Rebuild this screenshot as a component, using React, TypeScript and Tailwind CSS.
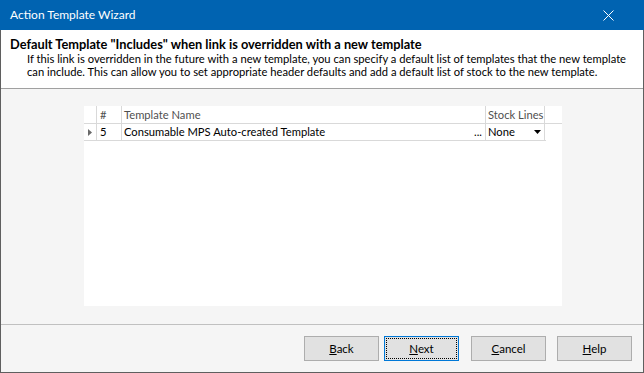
import React from "react";

const font = { fontFamily: 'Lato, "Noto Sans", "Liberation Sans", sans-serif' };

function Btn({ label, u, focused }: { label: string; u: number; focused?: boolean }) {
  return (
    <div
      className={`w-[75px] h-[25px] flex items-center justify-center text-[11.5px] text-black bg-[#e1e1e1] border ${
        focused ? "border-[#0078d7]" : "border-[#adadad]"
      }`}
    >
      <div
        className={`w-[71px] h-[21px] flex items-center justify-center ${
          focused ? "border border-dotted border-black" : ""
        }`}
      >
        <span>
          {label.slice(0, u)}
          <span className="underline">{label.charAt(u)}</span>
          {label.slice(u + 1)}
        </span>
      </div>
    </div>
  );
}

export default function App() {
  return (
    <div style={font} className="w-[644px] h-[373px] flex flex-col bg-[#f5f5f5] overflow-hidden">
      <div className="h-[30px] bg-[#0063b1] flex items-center justify-between pl-[10px] pr-[30px] shrink-0">
        <span className="text-white text-[12px]">Action Template Wizard</span>
        <svg width="11" height="11" viewBox="0 0 11 11">
          <path d="M0.5 0.5 L10.5 10.5 M10.5 0.5 L0.5 10.5" stroke="white" strokeWidth="1" />
        </svg>
      </div>
      <div className="flex-1 flex flex-col border-x border-b border-[#5f5f5f]">
        <div className="h-[59px] bg-white border-b border-[#a0a0a0] pl-[9px] pt-[7px] shrink-0 whitespace-nowrap">
          <div className="text-[12.8px] font-bold text-black leading-[15px]">
            Default Template "Includes" when link is overridden with a new template
          </div>
          <div className="pl-[17px] text-[11.2px] text-black leading-[13px]">
            <div>If this link is overridden in the future with a new template, you can specify a default list of templates that the new template</div>
            <div>can include. This can allow you to set appropriate header defaults and add a default list of stock to the new template.</div>
          </div>
        </div>
        <div className="h-[235px] pt-[17px] pl-[83px] shrink-0">
          <div className="w-[478px] h-[200px] bg-white flex flex-col text-[11.2px] whitespace-nowrap">
            <div className="flex h-[18px] border-b border-[#d9d9d9] text-[#505050]">
              <div className="w-[12px]" />
              <div className="w-[25px] border-l border-[#d9d9d9] pl-[3px] leading-[17px]">#</div>
              <div className="w-[364px] border-l border-[#d9d9d9] pl-[2px] leading-[17px]">Template Name</div>
              <div className="w-[60px] border-x border-[#d9d9d9] pl-[2px] leading-[17px]">Stock Lines</div>
            </div>
            <div className="flex h-[17px] border-b border-[#d9d9d9] text-black w-[462px]">
              <div className="w-[12px] flex items-center justify-center">
                <svg width="4" height="7" viewBox="0 0 4 7">
                  <path d="M0 0 L4 3.5 L0 7 Z" fill="#6a6a6a" />
                </svg>
              </div>
              <div className="w-[25px] border-l border-[#d9d9d9] pl-[3px] leading-[16px]">5</div>
              <div className="w-[364px] border-l border-[#d9d9d9] pl-[2px] leading-[16px] flex justify-between pr-[3px]">
                <span>Consumable MPS Auto-created Template</span>
                <span>...</span>
              </div>
              <div className="w-[60px] border-x border-[#d9d9d9] pl-[2px] leading-[16px] flex justify-between items-center pr-[3px]">
                <span>None</span>
                <svg width="7" height="4" viewBox="0 0 7 4">
                  <path d="M0 0 L7 0 L3.5 4 Z" fill="black" />
                </svg>
              </div>
            </div>
          </div>
        </div>
        <div className="border-t border-[#c0c0c0] flex-1 flex justify-end items-start pt-[11px] pr-[11px]">
          <div className="flex">
            <Btn label="Back" u={0} />
            <div className="w-[5px]" />
            <Btn label="Next" u={0} focused />
            <div className="w-[12px]" />
            <Btn label="Cancel" u={0} />
            <div className="w-[11px]" />
            <Btn label="Help" u={0} />
          </div>
        </div>
      </div>
    </div>
  );
}
